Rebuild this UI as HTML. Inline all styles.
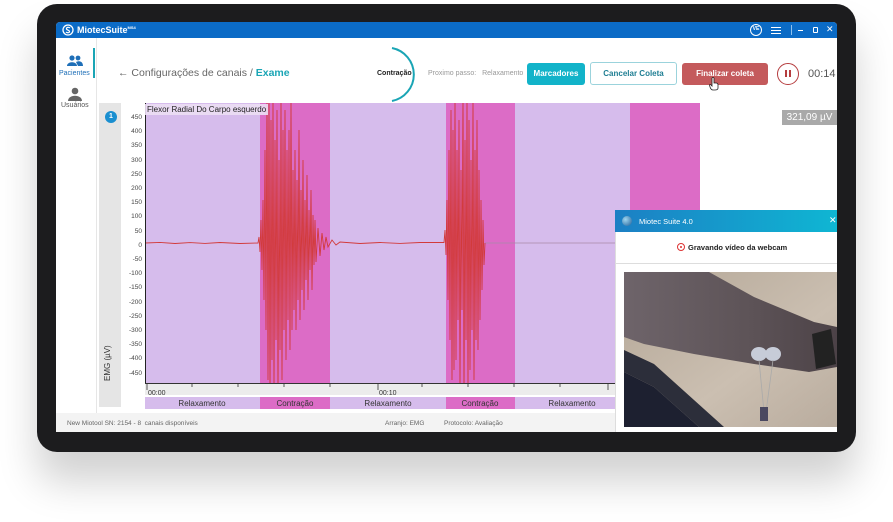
<!DOCTYPE html>
<html><head><meta charset="utf-8"><style>
*{margin:0;padding:0;box-sizing:border-box}
body{width:893px;height:522px;background:#fff;position:relative;overflow:hidden;font-family:"Liberation Sans",sans-serif}
.abs{position:absolute}
.bezel{left:37px;top:4px;width:819px;height:448px;background:#1c1c1e;border-radius:20px;box-shadow:0 30px 40px rgba(0,0,0,.18)}
.screen{left:56px;top:22px;width:781px;height:410px;background:#fff;overflow:hidden;border-radius:4px 4px 0 0}
.t{position:absolute;white-space:nowrap}
</style></head><body>
<div class="abs bezel"></div>
<div class="abs screen">
 <div class="abs" style="left:0;top:0;width:781px;height:16px;background:#0b6bc6"></div>
 <svg class="abs" style="left:6px;top:2px" width="12" height="12" viewBox="0 0 12 12"><circle cx="6" cy="6" r="5" fill="none" stroke="#fff" stroke-width="1.3"/><path d="M8 4 C7 3 4 3 4.5 5 C5 6.5 8 6 7.5 8 C7 9 5 9 4 8" fill="none" stroke="#fff" stroke-width="1.2"/></svg>
 <div class="t" style="left:21px;top:3px;color:#fff;font-size:9px;font-weight:bold">MiotecSuite<sup style="font-size:4px">MS4</sup></div>
 <div class="abs" style="left:694px;top:2px;width:12px;height:12px;border:1.3px solid #fff;border-radius:50%;color:#fff;font-size:5px;font-weight:bold;text-align:center;line-height:9px">VE</div>
 <div class="abs" style="left:715px;top:5px;width:10px;height:1.3px;background:#fff;box-shadow:0 3px 0 #fff,0 6px 0 #fff"></div>
 <div class="abs" style="left:735px;top:3px;width:1px;height:10px;background:#8fc1ee"></div>
 <div class="abs" style="left:742px;top:8px;width:5px;height:1.4px;background:#fff"></div>
 <div class="abs" style="left:757px;top:5px;width:5px;height:6px;border:1px solid #fff;border-radius:1px"></div>
 <div class="t" style="left:770px;top:2px;color:#fff;font-size:9px">✕</div>
 <div class="abs" style="left:40px;top:16px;width:1px;height:375px;background:#e6e6e6"></div>
 <div class="abs" style="left:37px;top:26px;width:2px;height:30px;background:#1aa5b5"></div>
 <svg class="abs" style="left:11px;top:33px" width="16" height="13" viewBox="0 0 16 13"><circle cx="5" cy="3" r="2.6" fill="#1e6fb8"/><circle cx="11" cy="3" r="2.4" fill="#1e6fb8"/><path d="M0 11 C0 6 10 6 10 11Z M9 7 C13 5 16 7 16 11 L11 11Z" fill="#1e6fb8"/></svg>
 <div class="t" style="left:3px;top:48px;font-size:7px;color:#1e6fb8">Pacientes</div>
 <svg class="abs" style="left:12px;top:65px" width="14" height="14" viewBox="0 0 14 14"><circle cx="7" cy="4" r="3.3" fill="#666"/><path d="M0 14 C0 7 14 7 14 14Z" fill="#666"/></svg>
 <div class="t" style="left:5px;top:80px;font-size:7px;color:#555">Usuários</div>
 <div class="t" style="left:62px;top:45px;font-size:10.5px;color:#666">← Configurações de canais / <b style="color:#1aa5b5">Exame</b></div>
 <svg class="abs" style="left:300px;top:20px" width="80" height="66" viewBox="0 0 80 66"><path d="M36 6 A27 27 0 0 1 36 59" fill="none" stroke="#1aa5b5" stroke-width="2"/></svg>
 <div class="t" style="left:321px;top:48px;font-size:7px;font-weight:bold;color:#222">Contração</div>
 <div class="t" style="left:372px;top:48px;font-size:7px;color:#999">Proximo passo:&nbsp;&nbsp; Relaxamento</div>
 <div class="abs" style="left:471px;top:41px;width:58px;height:22px;background:#12b3c9;border-radius:3px;color:#fff;font-size:8px;font-weight:bold;text-align:center;line-height:22px">Marcadores</div>
 <div class="abs" style="left:534px;top:40px;width:87px;height:23px;border:1px solid #9bd3dc;border-radius:3px;color:#1f7e93;font-size:8px;font-weight:bold;text-align:center;line-height:21px">Cancelar Coleta</div>
 <div class="abs" style="left:626px;top:41px;width:86px;height:22px;background:#c45a5c;border-radius:3px;color:#fff;font-size:8px;font-weight:bold;text-align:center;line-height:22px">Finalizar coleta</div>
 <svg class="abs" style="left:653px;top:55px" width="10" height="14" viewBox="0 0 10 14"><path d="M3 1 Q4 0 5 1 L5 6 L7 6 Q9 6 9 8 L9 11 Q9 13 6 13 L4 13 Q2 13 1 10 L0.5 8 Q1 7 2 8 L3 9Z" fill="#fff" stroke="#222" stroke-width="0.8"/></svg>
 <div class="abs" style="left:721px;top:41px;width:22px;height:22px;border:1.3px solid #b53c3e;border-radius:50%"></div>
 <div class="abs" style="left:729px;top:48px;width:2px;height:7px;background:#b53c3e;box-shadow:4px 0 0 #b53c3e"></div>
 <div class="t" style="left:752px;top:46px;font-size:11px;color:#555">00:14</div>
 <div class="abs" style="left:43px;top:81px;width:22px;height:304px;background:#e5e5e5"></div>
 <div class="abs" style="left:49px;top:89px;width:12px;height:12px;background:#1a8fd0;border-radius:50%;color:#fff;font-size:7px;text-align:center;line-height:12px;font-weight:bold">1</div>
 <div class="t" style="font-size:8px;color:#333;transform:rotate(-90deg);transform-origin:left top;top:359px;left:47px">EMG (µV)</div>
 <div class="abs" style="left:65px;top:81px;width:25px;height:304px;background:#fff"></div>
 <svg class="abs" style="left:0;top:0" width="781" height="410" viewBox="56 22 781 410">
  <rect x="145" y="103" width="555" height="280" fill="#d6bcec"/>
  <rect x="260" y="103" width="70" height="280" fill="#dc6cc6"/>
  <rect x="446" y="103" width="69" height="280" fill="#dc6cc6"/>
  <rect x="630" y="103" width="70" height="280" fill="#dc6cc6"/>
  <line x1="485" y1="243" x2="700" y2="243" stroke="#a98aa8" stroke-width="0.7"/>
  <clipPath id="c"><rect x="145" y="103" width="555" height="280"/></clipPath>
  <g clip-path="url(#c)" fill="none" stroke="#d23a3a" stroke-width="0.9">
   <path d="M145 243 L160 242.4 L175 243.5 L190 242.6 L205 243.4 L220 242.5 L240 243.5 L258 243 L259 237 L260 252 L261 220 L262 270 L263 200 L264 300 L265 150 L266 330 L267 90 L268 380 L269 95 L270 400 L271 120 L272 360 L273 100 L274 390 L275 140 L276 340 L277 110 L278 395 L279 160 L280 350 L281 100 L282 380 L283 130 L284 330 L285 110 L286 360 L287 150 L288 320 L289 130 L290 350 L291 100 L292 330 L293 170 L294 310 L295 150 L296 330 L297 180 L298 300 L299 130 L300 320 L301 190 L302 290 L303 160 L304 310 L305 200 L306 280 L307 175 L308 300 L309 210 L310 270 L311 190 L312 290 L313 215 L314 265 L315 220 L316 262 L318 228 L320 256 L322 233 L324 250 L326 237 L328 247 L332 240 L336 245 L340 242 L360 243.5 L380 242.5 L400 243.4 L420 242.5 L444 242.5 L445 230 L446 255 L447 200 L448 300 L449 150 L450 340 L451 110 L452 380 L453 130 L454 370 L455 100 L456 360 L457 150 L458 320 L459 120 L460 390 L461 170 L462 310 L463 90 L464 400 L465 140 L466 340 L467 100 L468 390 L469 120 L470 370 L471 160 L472 330 L473 100 L474 380 L475 150 L476 340 L477 120 L478 350 L479 170 L480 320 L481 200 L482 290 L483 220 L484 265 L485 243"/>
  </g>
  <line x1="145.5" y1="103" x2="145.5" y2="383" stroke="#222" stroke-width="1"/>
  <line x1="145" y1="383.5" x2="615" y2="383.5" stroke="#333"/>
  <rect x="145" y="384" width="470" height="11" fill="#ececec"/>
  <g stroke="#333" stroke-width="0.8"><line x1="147" y1="384" x2="147" y2="390"/><line x1="192" y1="384" x2="192" y2="387"/><line x1="238" y1="384" x2="238" y2="387"/><line x1="284" y1="384" x2="284" y2="387"/><line x1="330" y1="384" x2="330" y2="387"/><line x1="378" y1="384" x2="378" y2="390"/><line x1="422" y1="384" x2="422" y2="387"/><line x1="468" y1="384" x2="468" y2="387"/><line x1="514" y1="384" x2="514" y2="387"/><line x1="560" y1="384" x2="560" y2="387"/><line x1="608" y1="384" x2="608" y2="390"/></g>
  <text x="148" y="395" font-size="7" fill="#333" font-family="Liberation Sans">00:00</text>
  <text x="379" y="395" font-size="7" fill="#333" font-family="Liberation Sans">00:10</text>
  <g font-size="6.5" fill="#444" font-family="Liberation Sans" text-anchor="end">
   <text x="142" y="119">450</text><text x="142" y="133">400</text><text x="142" y="147">350</text><text x="142" y="162">300</text><text x="142" y="176">250</text><text x="142" y="190">200</text><text x="142" y="204">150</text><text x="142" y="218">100</text><text x="142" y="233">50</text><text x="142" y="247">0</text><text x="142" y="261">-50</text><text x="142" y="275">-100</text><text x="142" y="289">-150</text><text x="142" y="304">-200</text><text x="142" y="318">-250</text><text x="142" y="332">-300</text><text x="142" y="346">-350</text><text x="142" y="360">-400</text><text x="142" y="375">-450</text>
  </g>
  <rect x="145" y="397" width="470" height="12" fill="#d6bcec"/>
  <rect x="260" y="397" width="70" height="12" fill="#dc6cc6"/>
  <rect x="446" y="397" width="69" height="12" fill="#dc6cc6"/>
  <g font-size="8" fill="#333" font-family="Liberation Sans" text-anchor="middle">
   <text x="202" y="406">Relaxamento</text><text x="295" y="406">Contração</text><text x="388" y="406">Relaxamento</text><text x="480" y="406">Contração</text><text x="572" y="406">Relaxamento</text>
  </g>
 </svg>
 <div class="abs" style="left:89px;top:82px;background:rgba(236,222,244,.9);font-size:8px;color:#222;padding:1px 2px">Flexor Radial Do Carpo esquerdo</div>
 <div class="abs" style="left:726px;top:88px;width:55px;height:15px;background:#a9a9a9;color:#fff;font-size:10px;line-height:15px;text-align:center">321,09 µV</div>
 <div class="abs" style="left:0;top:391px;width:560px;height:19px;background:#f3f3f3"></div>
 <div class="t" style="left:11px;top:398px;font-size:6.5px;color:#666">New Miotool SN: 2154 - 8&nbsp; canais disponíveis</div>
 <div class="t" style="left:329px;top:398px;font-size:6.5px;color:#666">Arranjo: EMG</div>
 <div class="t" style="left:388px;top:398px;font-size:6.5px;color:#666">Protocolo: Avaliação</div>
 <div class="abs" style="left:559px;top:188px;width:222px;height:222px;background:#fff;border-left:1px solid #ddd"></div>
 <div class="abs" style="left:559px;top:188px;width:222px;height:22px;background:linear-gradient(90deg,#1c7fc4,#0fb6d3)"></div>
 <div class="abs" style="left:566px;top:194px;width:10px;height:10px;border-radius:50%;background:radial-gradient(circle at 35% 35%,#9fd6f0,#1e5e98)"></div>
 <div class="t" style="left:583px;top:195px;font-size:7.5px;color:#fff">Miotec Suite 4.0</div>
 <div class="t" style="left:773px;top:193px;font-size:9px;color:#fff">✕</div>
 <div class="abs" style="left:621px;top:221px;width:8px;height:8px;border:1.3px solid #d33;border-radius:50%"></div>
 <div class="abs" style="left:624px;top:224px;width:2px;height:2px;background:#d33;border-radius:50%"></div>
 <div class="t" style="left:632px;top:221px;font-size:7.5px;color:#222;font-weight:bold">Gravando vídeo da webcam</div>
 <div class="abs" style="left:559px;top:241px;width:222px;height:1px;background:#ddd"></div>
 <svg class="abs" style="left:568px;top:250px" width="213" height="155" viewBox="0 0 213 155">
  <defs><linearGradient id="w" x1="0" y1="0" x2="1" y2="1"><stop offset="0" stop-color="#b3a696"/><stop offset=".6" stop-color="#cbbfb1"/><stop offset="1" stop-color="#b9ac9e"/></linearGradient>
  <linearGradient id="a" x1="0" y1="0" x2="1" y2="0"><stop offset="0" stop-color="#6e646a"/><stop offset=".6" stop-color="#5d5357"/><stop offset="1" stop-color="#4c4247"/></linearGradient></defs>
  <rect width="213" height="155" fill="url(#w)"/>
  <path d="M0 0 L85 0 L130 25 L190 50 L213 55 L213 95 L185 100 L130 92 L70 82 L20 72 L0 65Z" fill="url(#a)"/>
  <path d="M0 100 L30 115 L75 155 L0 155Z" fill="#1d2030"/>
  <path d="M0 78 L30 92 L100 155 L75 155 L30 115 L0 100Z" fill="#2c2e3a"/>
  <path d="M188 62 L207 57 L212 92 L192 97Z" fill="#222"/>
  <ellipse cx="135" cy="82" rx="8" ry="7" fill="#c7ccd8"/><ellipse cx="149" cy="82" rx="8" ry="7" fill="#c7ccd8"/>
  <path d="M135 88 L140 140 M149 88 L142 140" stroke="#aaa" stroke-width="0.8" fill="none"/>
  <rect x="136" y="135" width="8" height="14" fill="#4a4860"/>
 </svg>
</div>
</body></html>
